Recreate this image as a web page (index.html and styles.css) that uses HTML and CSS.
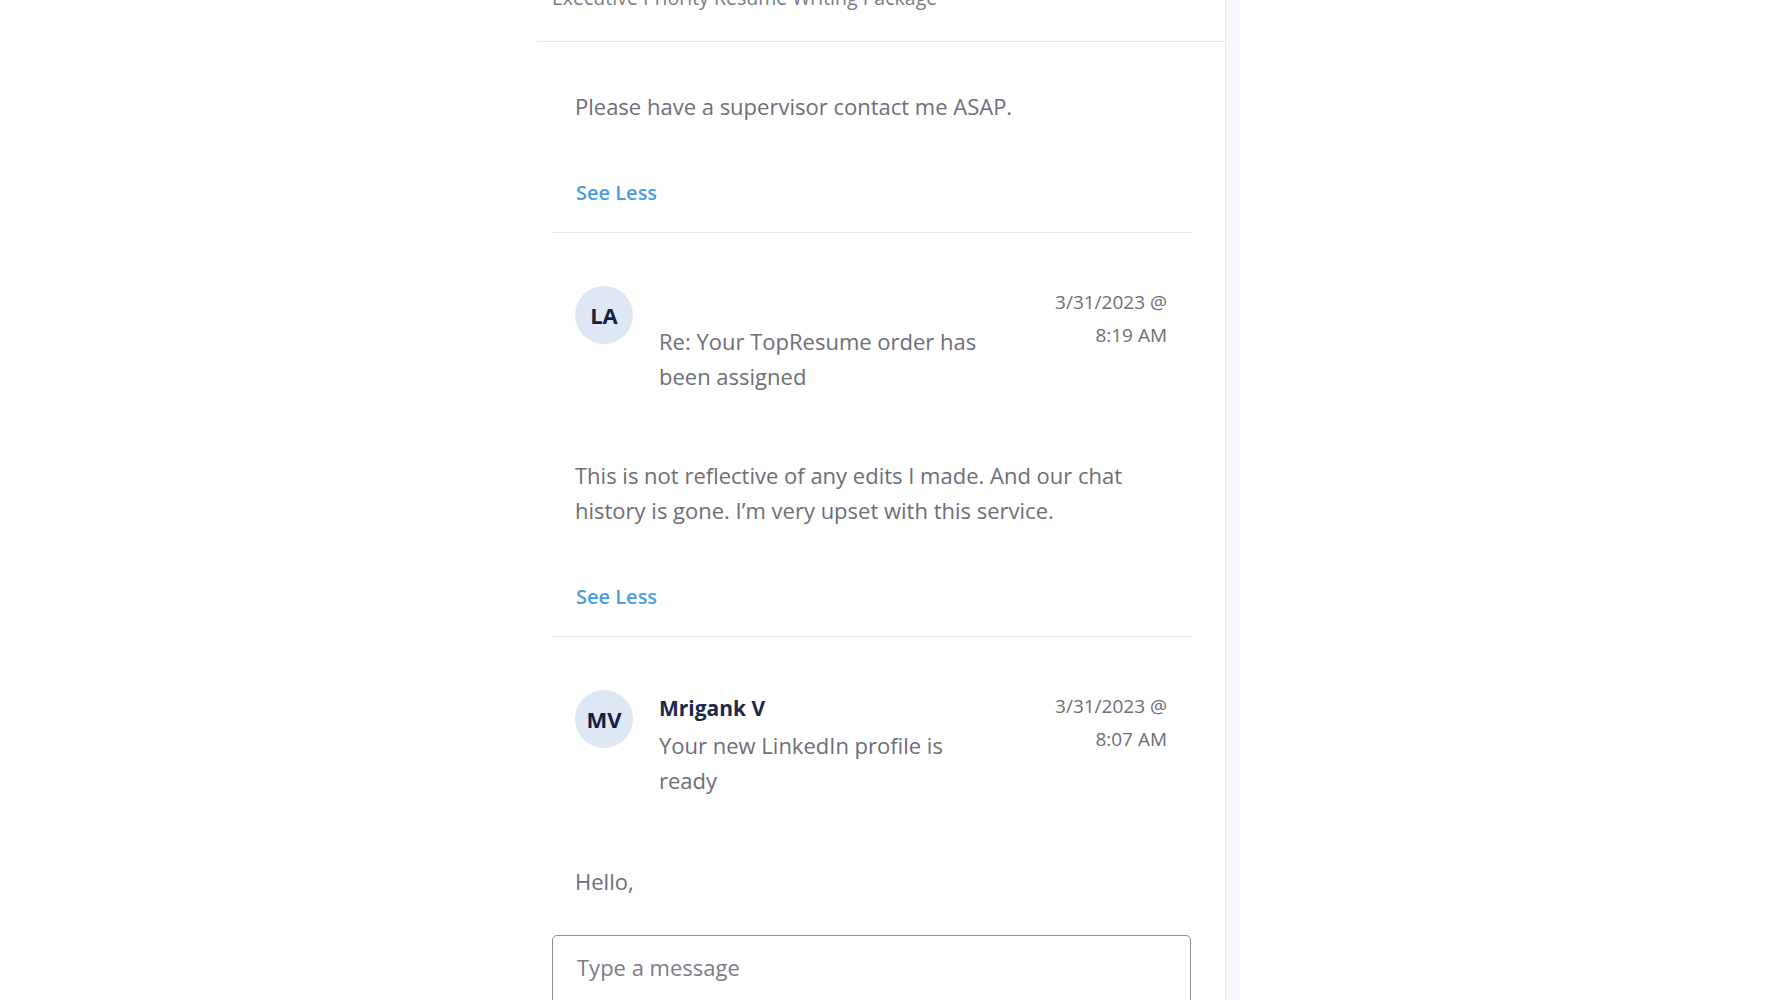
FILE: index.html
```html
<!DOCTYPE html>
<html lang="en">
<head>
<meta charset="utf-8">
<title>Messages</title>
<link rel="stylesheet" href="styles.css">
</head>
<body>
<div class="page">
  <section class="thread">
    <header class="thread-head">
      <div class="thread-title">Executive Priority Resume Writing Package</div>
    </header>
    <div class="messages">
      <article class="msg msg-tail">
        <p class="msg-text">Please have a supervisor contact me ASAP.</p>
        <a class="see-less">See Less</a>
      </article>
      <article class="msg">
        <div class="msg-head">
          <div class="avatar">LA</div>
          <div class="msg-meta">
            <div class="msg-name"></div>
            <div class="msg-subject">Re: Your TopResume order has been assigned</div>
          </div>
          <div class="msg-date">3/31/2023 @<br>8:19 AM</div>
        </div>
        <p class="msg-text msg-body">This is not reflective of any edits I made. And our chat history is gone. I’m very upset with this service.</p>
        <a class="see-less">See Less</a>
      </article>
      <article class="msg msg-open">
        <div class="msg-head">
          <div class="avatar">MV</div>
          <div class="msg-meta">
            <div class="msg-name">Mrigank V</div>
            <div class="msg-subject">Your new LinkedIn profile is ready</div>
          </div>
          <div class="msg-date">3/31/2023 @<br>8:07 AM</div>
        </div>
        <p class="msg-text msg-body msg-last">Hello,</p>
      </article>
    </div>
    <div class="composer">
      <div class="composer-input">Type a message</div>
    </div>
  </section>
  <div class="rail"></div>
</div>
</body>
</html>
```

FILE: styles.css
```css
html, body {
  margin: 0;
  padding: 0;
  background: #ffffff;
}

body {
  font-family: "Open Sans", "Liberation Sans", sans-serif;
  color: #6e6e78;
}

.page {
  display: flex;
  height: 1000px;
  overflow: hidden;
  padding-left: 537px;
}

.thread {
  width: 688px;
  border-right: 1px solid #e6e9ee;
}

.thread-head {
  display: flow-root;
  height: 41px;
  border-bottom: 1px solid #e8e8ea;
  padding-left: 15px;
  background: #ffffff;
}

.thread-title {
  margin-top: -14px;
  font-size: 19.5px;
  line-height: 24px;
  color: #7a7a84;
}

.messages {
  padding: 0 34px 0 15px;
}

.msg {
  border-bottom: 1px solid #e6e6e8;
  padding: 53px 0 27px 23px;
}

.msg-tail {
  padding-top: 47px;
}

.msg-open {
  border-bottom: none;
  padding-bottom: 0;
}

.msg-text {
  margin: 0;
  font-size: 22px;
  line-height: 35px;
  color: #6e6e78;
  padding-right: 24px;
}

.see-less {
  display: block;
  margin-top: 57px;
  padding-left: 1px;
  font-size: 20px;
  line-height: 24px;
  font-weight: 600;
  color: #4a9ee0;
  cursor: pointer;
}

.msg-head {
  display: flex;
  align-items: flex-start;
  padding-right: 24px;
}

.avatar {
  flex: none;
  width: 58px;
  height: 58px;
  border-radius: 50%;
  background: #dde8f4;
  color: #14223f;
  font-size: 22px;
  font-weight: 700;
  display: flex;
  align-items: center;
  justify-content: center;
}

.msg-meta {
  flex: none;
  width: 330px;
  margin-left: 26px;
}

.msg-name {
  min-height: 38px;
  font-size: 21px;
  line-height: 36px;
  font-weight: 700;
  color: #1b2a4a;
}

.msg-subject {
  font-size: 22px;
  line-height: 35px;
  color: #6e6e78;
}

.msg-date {
  margin-left: auto;
  margin-top: 0;
  text-align: right;
  font-size: 19px;
  line-height: 33px;
  color: #6e6e78;
}

.msg-body {
  margin-top: 64px;
}

.msg-last {
  margin-top: 66px;
}

.composer {
  padding: 36px 34px 0 15px;
}

.composer-input {
  height: 90px;
  border: 1.5px solid #8c8c92;
  border-radius: 5px;
  padding: 14px 24px;
  font-size: 22px;
  line-height: 35px;
  color: #7c7c86;
}

.rail {
  width: 14px;
  background: #f5f8fc;
}
```
